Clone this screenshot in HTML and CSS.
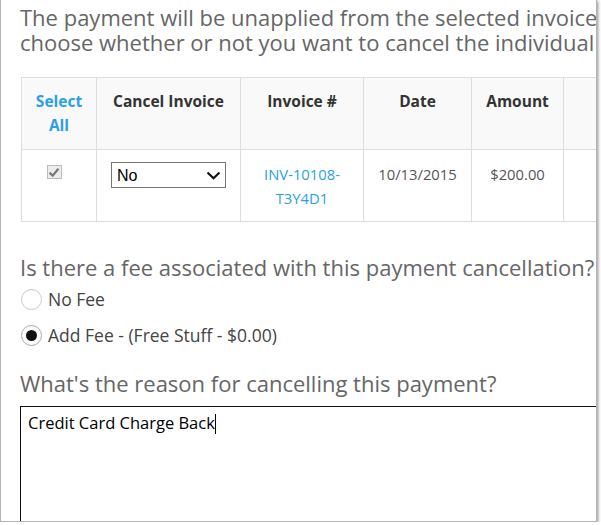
FILE: index.html
```html
<!DOCTYPE html>
<html>
<head>
<meta charset="utf-8">
<link rel="stylesheet" href="styles.css">
</head>
<body>
<div class="window">
  <div class="content">
    <p class="lead">The payment will be unapplied from the selected invoices. Please<br>choose whether or not you want to cancel the individual invoices as well.</p>

    <table class="invoices">
      <thead>
        <tr>
          <th class="c-select"><a class="link" href="#">Select All</a></th>
          <th class="c-cancel">Cancel Invoice</th>
          <th class="c-num">Invoice #</th>
          <th class="c-date">Date</th>
          <th class="c-amount">Amount</th>
          <th class="c-bal">Balance Due</th>
        </tr>
      </thead>
      <tbody>
        <tr>
          <td class="c-select">
            <span class="check">
              <svg width="12" height="11" viewBox="0 0 12 11"><path d="M1.6 5.6 L4.7 8.7 L10.4 1.8" fill="none" stroke="#777" stroke-width="2.2"/></svg>
            </span>
          </td>
          <td class="c-cancel">
            <div class="select">
              <span>No</span>
              <svg width="15" height="9" viewBox="0 0 15 9"><path d="M1.5 1.5 L7.5 7.2 L13.5 1.5" fill="none" stroke="#111" stroke-width="2.2"/></svg>
            </div>
          </td>
          <td class="c-num"><a class="link" href="#">INV-10108-<br>T3Y4D1</a></td>
          <td class="c-date">10/13/2015</td>
          <td class="c-amount">$200.00</td>
          <td class="c-bal">$200.00</td>
        </tr>
      </tbody>
    </table>

    <h3 class="question fee-q">Is there a fee associated with this payment cancellation?</h3>
    <label class="radio"><span class="dot"></span>No Fee</label>
    <label class="radio on"><span class="dot"></span>Add Fee - (Free Stuff - $0.00)</label>

    <h3 class="question reason-q">What's the reason for cancelling this payment?</h3>
    <div class="reason">Credit Card Charge Back<span class="caret"></span></div>
  </div>
</div>
</body>
</html>
```

FILE: styles.css
```css
html, body {
  margin: 0;
  padding: 0;
  background: #fff;
}

.window {
  box-sizing: border-box;
  width: 597px;
  height: 522px;
  border-left: 1px solid #b5b5b5;
  border-right: 1px solid #b5b5b5;
  border-bottom: 1px solid #b5b5b5;
  box-shadow: 1px 1px 3px rgba(0, 0, 0, 0.45);
  overflow: hidden;
  background: #fff;
}

.content {
  width: 900px;
  padding-left: 19px;
  font-family: "Open Sans", "Liberation Sans", sans-serif;
  color: #444;
}

.lead {
  margin: 5px 0 0;
  font-size: 22px;
  line-height: 25px;
  color: #666;
  white-space: nowrap;
}

.invoices {
  margin-top: 22px;
  margin-left: 1px;
  border-collapse: collapse;
  font-size: 14.8px;
  line-height: 24px;
}

.invoices th,
.invoices td {
  border: 1px solid #ddd;
  padding: 12px 10px 11px;
  text-align: center;
  vertical-align: top;
}

.invoices th {
  padding-top: 11px;
  padding-bottom: 12px;
  background: #f9f9f9;
  font-size: 15.5px;
  font-weight: bold;
  color: #333;
}

.invoices td {
  color: #555;
}

.c-select { width: 54px; }
.c-cancel { width: 123px; }
.c-num { width: 102px; }
.c-date { width: 87px; }
.c-amount { width: 71px; }
.c-bal { width: 220px; }

.link {
  color: #2a9fe0;
  text-decoration: none;
}

.invoices th .link {
  color: #2aa0e8;
}

.check {
  display: inline-flex;
  align-items: center;
  justify-content: center;
  box-sizing: border-box;
  width: 15px;
  height: 14px;
  margin-top: 3px;
  margin-right: 10px;
  border: 1px solid #bcbcbc;
  background: #ececec;
  vertical-align: top;
}

.select {
  display: flex;
  align-items: center;
  justify-content: space-between;
  box-sizing: border-box;
  width: 115px;
  height: 26px;
  margin-left: 4px;
  padding: 0 4px 0 5px;
  border: 1px solid #767676;
  font-family: "Liberation Sans", Arial, sans-serif;
  font-size: 16px;
  color: #000;
  text-align: left;
}

.select span {
  padding-top: 2px;
}

.question {
  margin: 0;
  font-size: 22px;
  font-weight: normal;
  line-height: 26px;
  color: #666;
  white-space: nowrap;
}

.fee-q {
  margin-top: 32px;
}

.radio {
  display: flex;
  align-items: center;
  gap: 6px;
  height: 22px;
  margin-left: 1px;
  font-size: 17.5px;
  color: #444;
}

.fee-q + .radio {
  margin-top: 8px;
}

.radio + .radio {
  margin-top: 14px;
}

.dot {
  box-sizing: border-box;
  width: 21px;
  height: 21px;
  border-radius: 50%;
  border: 1px solid #c8c8c8;
  background: #fff;
  display: flex;
  align-items: center;
  justify-content: center;
}

.radio.on .dot {
  border-color: #a8a8a8;
}

.radio.on .dot::after {
  content: "";
  width: 11px;
  height: 11px;
  border-radius: 50%;
  background: #111;
}

.reason-q {
  margin-top: 24px;
}

.reason {
  box-sizing: border-box;
  width: 620px;
  height: 140px;
  margin-top: 10px;
  padding: 6px 7px;
  border: 1px solid #111;
  font-size: 16.5px;
  line-height: 20px;
  color: #000;
}

.caret {
  display: inline-block;
  width: 1px;
  height: 20px;
  background: #000;
  vertical-align: -5px;
}
```
